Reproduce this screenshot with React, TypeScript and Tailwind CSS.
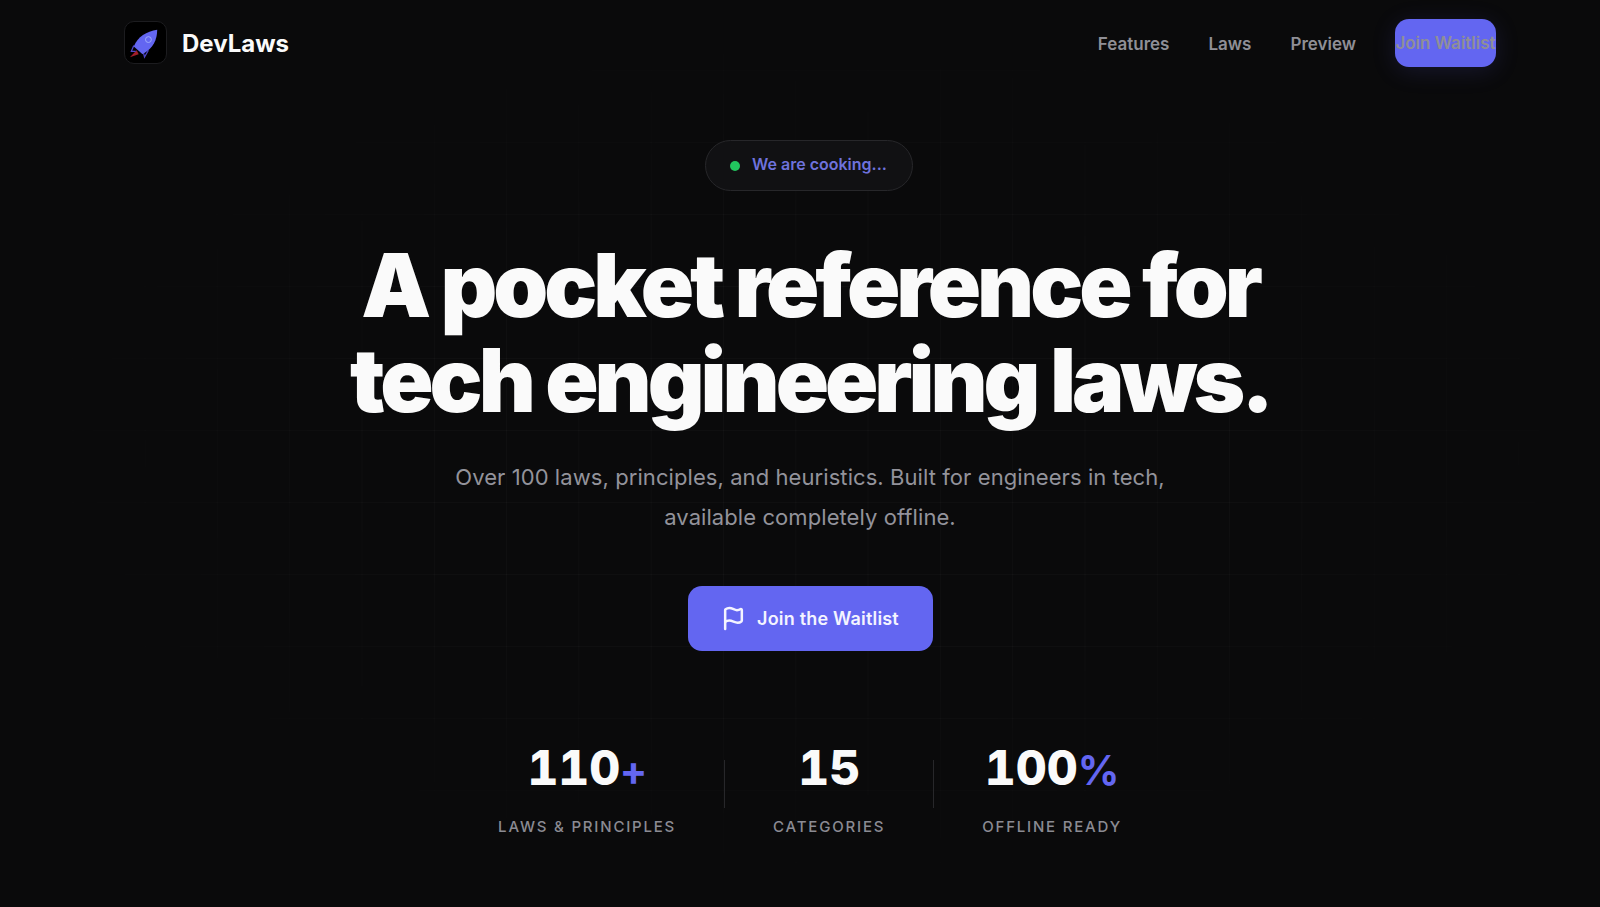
function Stat({ value, suffix, label }: { value: string; suffix?: string; label: string }) {
  return (
    <div className="flex flex-col items-center">
      <div className="flex h-[60px] items-baseline text-[48px] font-extrabold leading-[60px] tabular-nums text-[#fafafa]">
        {value}
        {suffix && <span className="text-[41px] font-bold text-[#6366f1]">{suffix}</span>}
      </div>
      <div className="mt-[18px] whitespace-nowrap text-[15px] font-medium tracking-[0.12em] text-[#8b8b93]">{label}</div>
    </div>
  );
}

export default function App() {
  return (
    <div className="relative min-h-[907px] overflow-hidden bg-[#0a0a0b] font-['Inter',sans-serif] text-white">
      <div className="absolute inset-0 bg-[linear-gradient(rgba(255,255,255,0.022)_1px,transparent_1px),linear-gradient(90deg,rgba(255,255,255,0.022)_1px,transparent_1px)] bg-[size:72.3px_72px] bg-[position:0_70px] [mask-image:radial-gradient(ellipse_at_51%_50%,black_35%,transparent_72%)]" />
      <div className="relative w-[1620px]">
        <nav className="mx-auto flex h-[85px] w-[1372px] items-center justify-between">
          <div className="flex items-center gap-[15px]">
            <div className="h-[43px] w-[43px] overflow-hidden rounded-[10px] border border-[#1c1c1f] bg-black">
              <svg viewBox="0 0 42 42" className="h-full w-full">
                <path d="M12 29 L5 36 L14 33Z" fill="#a11d2a" />
                <path d="M9 24 L6.5 30 L11 30" fill="none" stroke="#4f46c8" strokeWidth="1.3" />
                <path d="M19 32 L20 36 L24 29" fill="none" stroke="#4f46c8" strokeWidth="1.3" />
                <path d="M9 25 C13 15 22 10 33 8 C33 18 29 27 18 33Z" fill="#6366f1" />
                <circle cx="24" cy="18" r="3" fill="none" stroke="#a5b4fc" strokeWidth="0.9" />
              </svg>
            </div>
            <span className="pt-[2px] text-[24px] font-bold text-[#fafafa]">DevLaws</span>
          </div>
          <div className="flex items-center gap-[39px] text-[17px] font-semibold text-[#8f8f96]">
            <a className="pt-[4px]">Features</a>
            <a className="pt-[4px]">Laws</a>
            <a className="pt-[4px]">Preview</a>
            <a className="flex h-[48px] w-[101px] items-center justify-center whitespace-nowrap rounded-[14px] bg-[#6366f1] pt-[2px] shadow-[0_4px_24px_rgba(99,102,241,0.15)]">Join Waitlist</a>
          </div>
        </nav>
        <main className="flex flex-col items-center">
          <div className="mr-[2px] mt-[55px] flex h-[51px] w-[208px] items-center gap-[12px] rounded-full border border-[#27272a] bg-[#111113] pl-[24px] text-[16px] font-semibold text-[#6e72dc]">
            <span className="h-[10px] w-[10px] rounded-full bg-[#22c55e]" />
            <span className="pb-[3px]">We are cooking...</span>
          </div>
          <h1 className="mt-[47px] whitespace-nowrap text-center text-[88px] font-black leading-[95px] tracking-[-0.046em] text-[#fafafa]">
            A pocket reference for<br />tech engineering laws.
          </h1>
          <p className="mt-[29px] text-center text-[22px] leading-[40px] tracking-[0.0035em] text-[#93939b]">
            Over 100 laws, principles, and heuristics. Built for engineers in tech,<br />available completely offline.
          </p>
          <button className="mt-[49px] flex h-[65px] w-[245px] items-center justify-center gap-[11px] rounded-[14px] bg-[#6366f1] text-[18px] font-semibold tracking-[0.01em] text-[#f4f4ff]">
            <svg viewBox="0 0 24 24" className="h-[25px] w-[25px]" fill="none" stroke="currentColor" strokeWidth="2.4" strokeLinecap="round" strokeLinejoin="round">
              <path d="M4 22V4a1 1 0 0 1 .4-.8A6 6 0 0 1 8 2c3 0 5 2 7.333 2q2 0 3.067-.8A1 1 0 0 1 20 4v10a1 1 0 0 1-.4.8A6 6 0 0 1 16 16c-3 0-5-2-8-2a6 6 0 0 0-4 1.528" />
            </svg>
            Join the Waitlist
          </button>
          <div className="mt-[87px] flex items-center gap-[48px]">
            <Stat value="110" suffix="+" label="LAWS & PRINCIPLES" />
            <div className="mb-[8px] h-[48px] w-px bg-[#27272a]" />
            <Stat value="15" label="CATEGORIES" />
            <div className="mb-[8px] h-[48px] w-px bg-[#27272a]" />
            <Stat value="100" suffix="%" label="OFFLINE READY" />
          </div>
        </main>
      </div>
    </div>
  );
}
